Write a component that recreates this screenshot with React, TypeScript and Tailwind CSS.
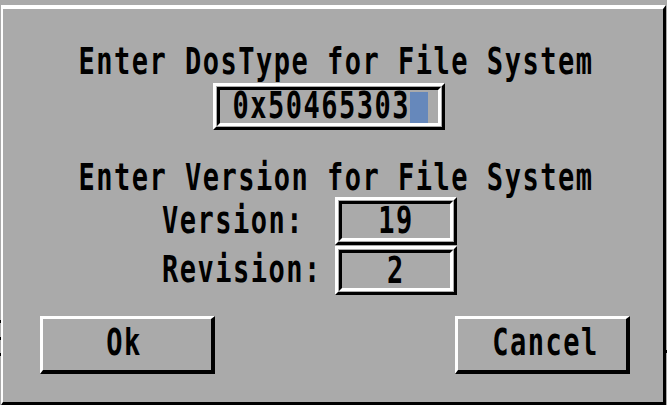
import type { ReactNode } from "react";

// Topaz-ish text: DejaVu Sans Mono bold, stretched tall like the Amiga hires font
const Topaz = ({ children, className = "" }: { children: ReactNode; className?: string }) => (
  <span
    className={`inline-block h-[30px] leading-[30px] text-[27px] font-bold tracking-[1.5px] scale-y-[1.35] whitespace-pre ${className}`}
  >
    {children}
  </span>
);

// string gadget ridge: raised outer frame, recessed inner frame
const Ridge = ({ children, className = "" }: { children: ReactNode; className?: string }) => (
  <div
    className={`border-t-[3px] border-l-[3px] border-t-white border-l-white border-r-[3px] border-b-[3px] border-r-black border-b-black p-[1px] ${className}`}
  >
    <div className="h-full w-full border-[3px] border-t-black border-l-black border-r-white border-b-white">
      {children}
    </div>
  </div>
);

const Button = ({ label, className = "" }: { label: string; className?: string }) => (
  <button
    type="button"
    className={`w-[175px] h-[58px] border-t-[3px] border-l-[3px] border-t-white border-l-white border-r-4 border-b-4 border-r-black border-b-black flex items-center justify-center pb-[3px] ${className}`}
  >
    <Topaz>{label}</Topaz>
  </button>
);

const App = () => {
  return (
    <div className="w-[667px] h-[405px] bg-[#aaaaaa] flex overflow-hidden text-black font-['DejaVu_Sans_Mono',monospace]">
      <div className="w-[1px] flex flex-col">
        <div className="mt-[320px] h-[3px] bg-black" />
        <div className="mt-[14px] h-[3px] bg-black" />
        <div className="mt-[13px] h-[3px] bg-black" />
      </div>

      <div className="mt-[5px] w-[665px] h-[400px] border-t-4 border-l-2 border-t-white border-l-white border-r-[3px] border-b-[3px] border-r-black border-b-black flex flex-col">
        <div className="mt-[38px] pl-[75.5px] h-[30px] flex">
          <Topaz>Enter DosType for File System</Topaz>
        </div>

        <Ridge className="mt-[6px] ml-[210px] w-[232px] h-[47px]">
          <div className="h-full flex items-start pl-[12.5px]">
            <Topaz className="mt-[1px]">0x50465303</Topaz>
            <div className="mt-[1.5px] self-stretch w-[17.75px] bg-[#6688bb]" />
          </div>
        </Ridge>

        <div className="mt-[33px] pl-[75.5px] h-[30px] flex">
          <Topaz>Enter Version for File System</Topaz>
        </div>

        <div className="mt-[4px] h-[48px] pl-[159px] flex items-center">
          <div className="w-[173px]">
            <Topaz>Version:</Topaz>
          </div>
          <Ridge className="w-[122px] h-full">
            <div className="h-full flex items-center justify-center">
              <Topaz>19</Topaz>
            </div>
          </Ridge>
        </div>

        <div className="mt-[1px] h-[49px] pl-[159px] flex items-center">
          <div className="w-[173px]">
            <Topaz>Revision:</Topaz>
          </div>
          <Ridge className="w-[122px] h-full">
            <div className="h-full flex items-center justify-center">
              <Topaz>2</Topaz>
            </div>
          </Ridge>
        </div>

        <div className="mt-[21px] pl-[37px] flex">
          <Button label="Ok" className="pr-[6px]" />
          <Button label="Cancel" className="ml-[240px] pl-[7px]" />
        </div>
      </div>

      <div className="w-[1px] flex flex-col">
        <div className="mt-[350px] h-[3px] bg-black" />
      </div>
    </div>
  );
};

export default App;
